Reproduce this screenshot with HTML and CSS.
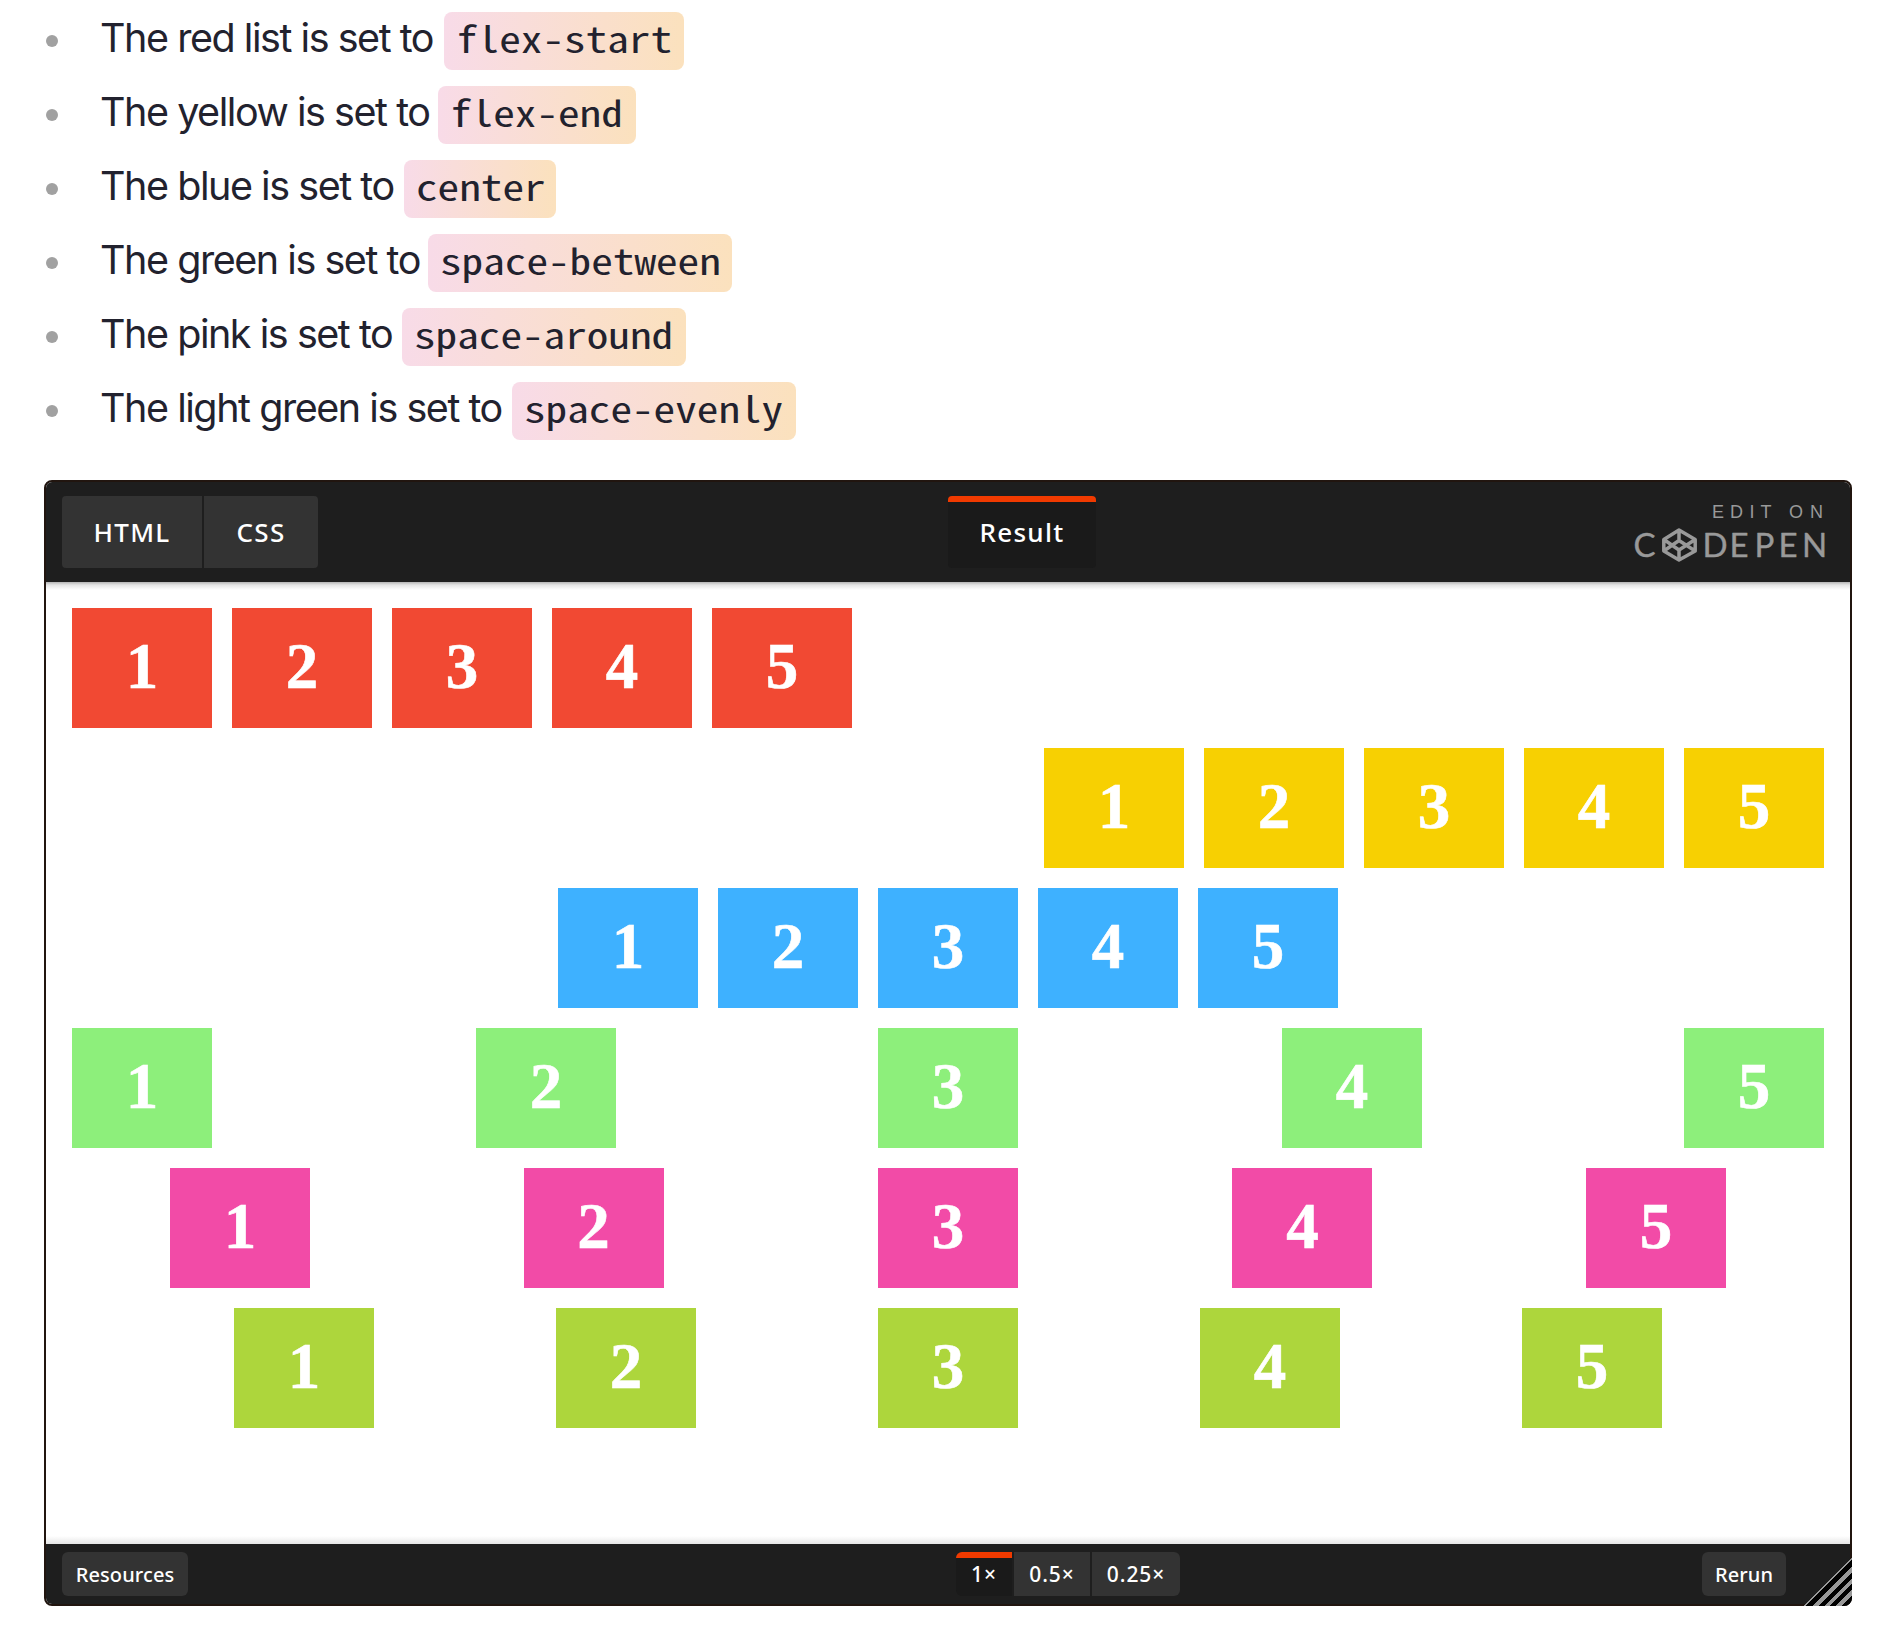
FILE: index.html
```html
<!DOCTYPE html>
<html lang="en">
<head>
<meta charset="utf-8">
<title>justify-content</title>
<link rel="stylesheet" href="styles.css">
</head>
<body>
<ul class="notes">
  <li><span class="t1">The red list is set to</span><code class="n10"><b>flex-start</b></code></li>
  <li><span class="t2">The yellow is set to</span><code class="n8"><b>flex-end</b></code></li>
  <li><span class="t3">The blue is set to</span><code class="n6"><b>center</b></code></li>
  <li><span class="t4">The green is set to</span><code class="n13"><b>space-between</b></code></li>
  <li><span class="t5">The pink is set to</span><code class="n12"><b>space-around</b></code></li>
  <li><span class="t6">The light green is set to</span><code class="n12"><b>space-evenly</b></code></li>
</ul>
<section class="pen">
  <header class="pen-head">
    <nav class="tabs"><a class="tab">HTML</a><a class="tab tab-css">CSS</a></nav>
    <a class="tab tab-result">Result</a>
    <a class="brand">
      <svg width="212" height="72" viewBox="0 0 212 72" fill="none" stroke="#999" stroke-linejoin="round">
        <text class="edit" y="22" x="88 106 125.5 136.5 165 186">EDITON</text>
        <text class="logo" y="60.5" x="9.5">C</text>
        <text class="logo" y="60.5" x="78.5 105.5 130.5 154.5 178">DEPEN</text>
        <path d="M55 34 71.200 43.500V55L55 64 39.800 55V43.500ZM55 34V44.500M55 54V64M39.800 43.500 55 54 71.200 43.500M39.800 55 55 44.500 71.200 55" stroke-width="3.500"/>
      </svg>
    </a>
  </header>
  <main class="stage">
    <ul class="row red"><li>1</li><li>2</li><li>3</li><li>4</li><li>5</li></ul>
    <ul class="row yellow"><li>1</li><li>2</li><li>3</li><li>4</li><li>5</li></ul>
    <ul class="row blue"><li>1</li><li>2</li><li>3</li><li>4</li><li>5</li></ul>
    <ul class="row green"><li>1</li><li>2</li><li>3</li><li>4</li><li>5</li></ul>
    <ul class="row pink"><li>1</li><li>2</li><li>3</li><li>4</li><li>5</li></ul>
    <ul class="row lime"><li>1</li><li>2</li><li>3</li><li>4</li><li>5</li></ul>
  </main>
  <footer class="pen-foot">
    <a class="btn resources">Resources</a>
    <div class="scales"><a class="btn x1">1×</a><a class="btn x05">0.5×</a><a class="btn x025">0.25×</a></div>
    <a class="btn rerun">Rerun</a>
  </footer>
  <i class="grip"></i>
</section>
</body>
</html>
```
FILE: styles.css
```css
* { box-sizing: border-box; }
body { margin: 0; background: #fff; color: #22222e; }
ul { list-style: none; margin: 0; padding: 0; }

.notes { padding: 12px 0 0 46px; display: flex; flex-direction: column; gap: 16px; height: 480px; }
.notes li { display: flex; align-items: center; height: 58px; font: 440 39.5px/58px Inter, sans-serif; letter-spacing: -1.46px; white-space: nowrap; }
.notes li::before { content: ""; width: 12px; height: 12px; border-radius: 50%; background: #a1a1a1; margin-right: 42px; flex: none; }
.notes span { flex: none; position: relative; top: -3px; }
.t1 { width: 344px; } .t2 { width: 338px; } .t3 { width: 304px; }
.t4 { width: 328px; } .t5 { width: 302px; } .t6 { width: 412px; }
.notes code { flex: none; height: 58px; padding: 0 12px; border-radius: 8px; background: linear-gradient(to right, #f8dbe8, #fbe1bd); font: 36px/51px "Noto Sans Mono CJK SC", "DejaVu Sans Mono", monospace; letter-spacing: 0; }
/* the half-width mono face is widened to a 0.6em advance */
.notes b { display: block; width: max-content; font-weight: 400; transform: scaleX(1.2); transform-origin: 0 0; }
.n6 { width: 152px; } .n8 { width: 198px; } .n10 { width: 240px; } .n12 { width: 284px; } .n13 { width: 304px; }

.pen { position: relative; width: 1808px; height: 1126px; margin-left: 44px; border: 2px solid #21150f; border-radius: 8px; display: flex; flex-direction: column; font-family: "Noto Sans", sans-serif; color: #fff; }
.pen-head { height: 100px; flex: none; background: #1e1e1e; border-radius: 6px 6px 0 0; padding: 14px 16px 0; display: grid; grid-template-columns: 886px 148px 1fr; align-items: start; }
.tabs { display: flex; gap: 2px; }
.tab { width: 140px; height: 72px; background: #333; border-radius: 4px 0 0 4px; text-align: center; font-size: 26px; line-height: 72px; letter-spacing: 1.3px; font-weight: 500; }
.tab-css { width: 114px; border-radius: 0 4px 4px 0; }
.tab-result { width: 148px; border-radius: 4px; background: #1a1a1a; border-top: 6px solid #f03a00; line-height: 60px; }
.brand { justify-self: end; margin-right: -2px; }
.brand svg { display: block; }
.brand text { fill: #999; }
.edit { font-family: "Liberation Sans", sans-serif; font-size: 18px; stroke: none; }
.logo { font-family: Lato, sans-serif; font-size: 33px; stroke-width: .4px; }

.stage { flex: 1; padding: 16px 16px 0; background: linear-gradient(#b4b4b4, #e4e4e4 3px, #fff 8px, #fff calc(100% - 8px), #e6e6e6); }
.row { display: flex; }
.row li { width: 140px; height: 120px; margin: 10px; background: var(--c); text-align: center; font: bold 65px/117px "Liberation Serif", serif; flex: none; -webkit-text-stroke: .6px #fff; }
.red { --c: #f14933; }
.yellow { --c: #f7d002; justify-content: flex-end; }
.blue { --c: #3eb1ff; justify-content: center; }
.green { --c: #8def7b; justify-content: space-between; }
.pink { --c: #f24ba7; justify-content: space-around; }
.lime { --c: #add63c; justify-content: space-evenly; }
.row.green li:nth-child(2n) { margin-left: 11px; margin-right: 9px; }
.row.pink li:first-child { margin-left: 10.8px; margin-right: 9.2px; }
.row.pink li:last-child { margin-left: 9.2px; margin-right: 10.8px; }

.pen-foot { height: 60px; flex: none; background: #1e1e1e; border-radius: 0 0 6px 6px; padding: 8px 64px 0 16px; display: flex; align-items: flex-start; }
.btn { height: 44px; border-radius: 6px; background: #333; text-align: center; font-size: 20px; line-height: 45px; letter-spacing: .1px; font-weight: 500; }
.resources { width: 126px; }
.scales { display: flex; gap: 2px; margin-left: 768px; }
.scales .btn { font-size: 21px; letter-spacing: .9px; }
.x1 { width: 56px; border-radius: 6px 0 0 6px; background: #1a1a1a; border-top: 6px solid #f03a00; line-height: 33px; }
.scales .x05 { width: 76px; border-radius: 0; }
.x025 { width: 88px; border-radius: 0 6px 6px 0; }
.rerun { width: 84px; margin-left: auto; }
.grip { position: absolute; right: -2px; bottom: -2px; width: 48px; height: 48px; border-bottom-right-radius: 8px; background: linear-gradient(135deg, transparent 50%, #999 50% 52%, #000 52% 59%, #999 59% 65%, #000 65% 71%, #999 71% 77%, #000 77% 83%, #999 83% 89%, #000 89% 95%, #999 95%); }
```
